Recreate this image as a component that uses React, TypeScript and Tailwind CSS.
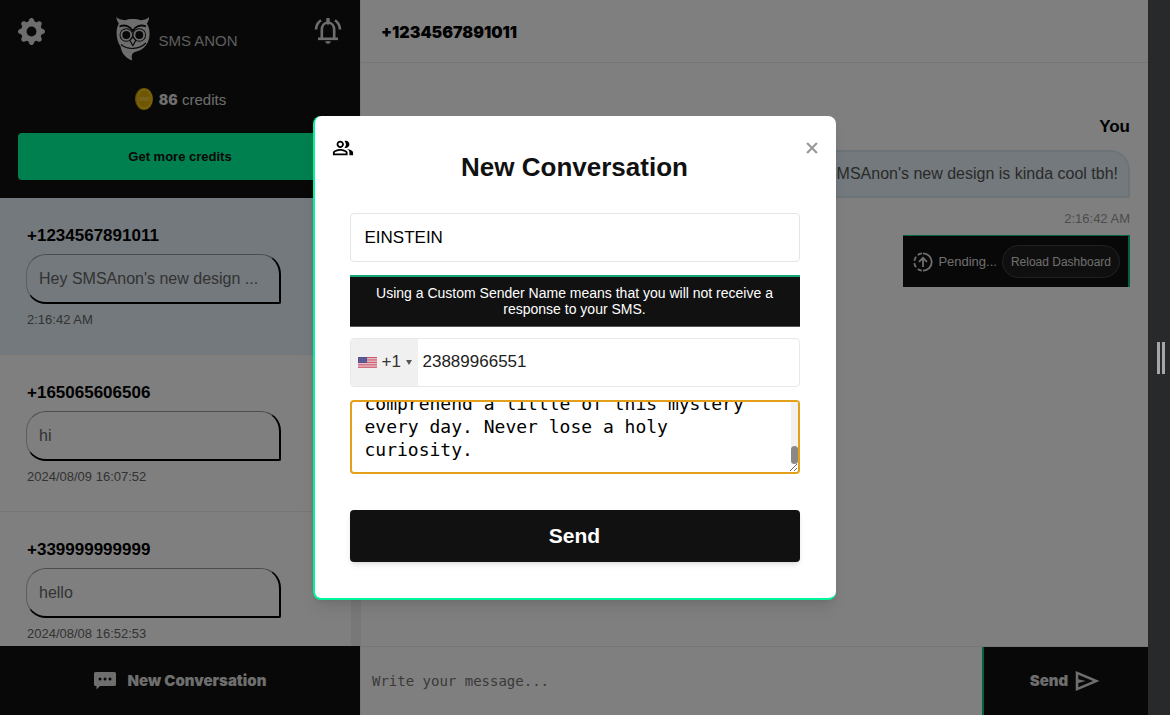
import { useEffect, useRef, useState } from 'react'
import { BsGearFill } from 'react-icons/bs'
import { MdOutlinePeopleAlt } from 'react-icons/md'

interface Conversation {
  number: string
  preview: string
  time: string
}

const conversations: Conversation[] = [
  { number: '+1234567891011', preview: "Hey SMSAnon's new design ...", time: '2:16:42 AM' },
  { number: '+165065606506', preview: 'hi', time: '2024/08/09 16:07:52' },
  { number: '+339999999999', preview: 'hello', time: '2024/08/08 16:52:53' },
]

const QUOTE =
  'The important thing is not to stop questioning. Curiosity has its own reason for existing. One cannot help but be in awe when he contemplates the mysteries of eternity, of life, of the marvelous structure of reality. It is enough if one tries merely to comprehend a little of this mystery every day. Never lose a holy curiosity.'

function OwlLogo() {
  return (
    <svg className="h-11 w-[34px]" viewBox="0 0 34 44" fill="none">
      <path
        fill="currentColor"
        d="M.5 0C2 2.200 5 2.500 9 3.300C13.500 1.500 20 1.500 25 3.300C29 2.500 31.500 2.200 33 0C33.200 2.500 32.200 4.500 30.800 6.500C33.300 10 34 15.500 33.300 20C32.300 27.500 27 33 20.500 34.500C16 35.500 14.800 38 16.300 43.500C9.500 41 5.500 36 4.500 29.500C.5 24 -1 13.500 2.800 6.500C1.400 4.500 .4 2.500 .5 0Z"
      />
      <path stroke="#111" strokeWidth="1.800" d="M3.500 9.500C9 7 14.500 9.500 16.800 14C19 9.500 24.500 7 30 9.500" />
      <circle cx="10.300" cy="18" r="6.800" fill="#111" />
      <circle cx="23.300" cy="18" r="6.800" fill="#111" />
      <circle cx="10.300" cy="18" r="4.900" stroke="currentColor" strokeWidth="1.900" />
      <circle cx="23.300" cy="18" r="4.900" stroke="currentColor" strokeWidth="1.900" />
      <path fill="currentColor" stroke="#111" strokeWidth="1.200" d="M16.800 20L19.800 23.300L16.800 28.500L13.800 23.300Z" />
      <path stroke="#111" strokeWidth="1.200" d="M5 27.500C12 33.500 23 32.500 30 26" />
    </svg>
  )
}

function BellIcon() {
  return (
    <svg className="h-[26px] w-7" viewBox="0 0 28 26" fill="none" stroke="currentColor" strokeWidth="2.600">
      <path d="M7.800 20.500V12C7.800 7.500 10.500 4.500 14 4.500S20.200 7.500 20.200 12V20.500" />
      <path d="M4 20.800H24" />
      <path d="M14 1V5" strokeWidth="3.400" strokeLinecap="round" />
      <path d="M7 2.200C3.800 4.400 2.200 7.500 2 11.500M21 2.200C24.200 4.400 25.800 7.500 26 11.500" />
      <path fill="currentColor" stroke="none" d="M11.200 23.300H16.800C16.600 24.800 15.500 25.700 14 25.700S11.400 24.800 11.200 23.300Z" />
    </svg>
  )
}

function Coin() {
  return (
    <svg className="h-[22px] w-[18px]" viewBox="0 0 18 22">
      <ellipse cx="9" cy="11" rx="9" ry="11" fill="#c99a00" />
      <ellipse cx="9.500" cy="11" rx="8" ry="10.500" fill="#efc31a" />
      <ellipse cx="9.500" cy="11" rx="6.200" ry="8.300" fill="#dfab08" />
      <text x="9.500" y="13" textAnchor="middle" fontSize="5" fontWeight="bold" fontFamily="Liberation Sans, sans-serif" fill="#f3d75a">
        SMS
      </text>
    </svg>
  )
}

function ChatIcon() {
  return (
    <svg className="h-[19px] w-[22px]" viewBox="0 0 22 19">
      <path fill="currentColor" d="M1.500 0H20.500A1.500 1.500 0 0 1 22 1.500V12.500A1.500 1.500 0 0 1 20.500 14H6L2.500 17.500V14H1.500A1.500 1.500 0 0 1 0 12.500V1.500A1.500 1.500 0 0 1 1.500 0Z" />
      <circle cx="6" cy="7" r="1.500" fill="#111" />
      <circle cx="11" cy="7" r="1.500" fill="#111" />
      <circle cx="16" cy="7" r="1.500" fill="#111" />
    </svg>
  )
}

function PendingIcon() {
  return (
    <svg className="size-5 shrink-0" viewBox="0 0 20 20" fill="none" stroke="currentColor" strokeWidth="1.800">
      <path d="M10 1.300A8.700 8.700 0 0 1 10 18.700" />
      <path d="M10 18.700A8.700 8.700 0 0 1 10 1.300" strokeDasharray="4.400 2.400" strokeDashoffset="-1.200" />
      <path d="M10 15V6M6 9.800L10 5.800L14 9.800" />
    </svg>
  )
}

function SendIcon() {
  return (
    <svg className="size-[30px]" viewBox="0 -960 960 960" fill="currentColor">
      <path d="M120-160v-640l760 320-760 320Zm80-120 474-200-474-200v140l240 60-240 60v140Z" />
    </svg>
  )
}

function UsFlag() {
  return (
    <svg className="h-[11px] w-[19px] shrink-0" viewBox="0 0 19 13" preserveAspectRatio="none">
      <rect width="19" height="13" fill="#f4e9ea" />
      {[0, 2, 4, 6, 8, 10, 12].map(y => (
        <rect key={y} y={y} width="19" height="1.2" fill="#c9586c" />
      ))}
      <rect width="9" height="7" fill="#50528f" />
      <path d="M1 2H8M1 3.500H8M1 5H8" stroke="#8889b4" strokeWidth=".6" strokeDasharray=".8 .8" />
    </svg>
  )
}

function ConversationItem({ item, active }: { item: Conversation; active: boolean }) {
  return (
    <li className={`border-b border-[#ededed] ${active ? 'bg-[#e6f2f8]' : 'bg-white'}`}>
      <a href="#" className="block px-[26px] pt-[26px] pb-[25px]">
        <h3 className="pl-px text-[17px] leading-6 font-bold text-black">{item.number}</h3>
        <p className="mt-[6px] h-[50px] w-[255px] truncate rounded-[20px] rounded-br-xs border-t border-r-2 border-b-2 border-l border-t-[#999] border-r-black border-b-black border-l-[#bbb] pl-3 text-base leading-[48px] text-[#666]">
          {item.preview}
        </p>
        <time className="mt-[7px] block pl-px text-[13px] leading-[18px] text-[#666]">{item.time}</time>
      </a>
    </li>
  )
}

function Sidebar({ onNew }: { onNew: () => void }) {
  return (
    <aside className="flex w-[360px] shrink-0 flex-col">
      <header className="bg-[#111] px-[18px] pt-[17px] pb-[18px] text-[#ddd]">
        <div className="flex h-[45px] items-start justify-between">
          <button aria-label="Settings" className="pt-px">
            <BsGearFill className="size-[27px]" />
          </button>
          <a href="#" aria-label="SMS Anon" className="flex items-center gap-2 pr-[5px]">
            <OwlLogo />
            <span className="pt-1 text-[15px] text-[#bbb]">SMS ANON</span>
          </a>
          <button aria-label="Notifications" className="pt-px">
            <BellIcon />
          </button>
        </div>
        <div className="mt-[25px] flex h-6 items-center justify-center gap-[6px] pl-px text-[15px]">
          <Coin />
          <p className="pt-[2px]">
            <strong className="font-['Inter',sans-serif] text-[14px] font-black">86</strong> credits
          </p>
        </div>
        <button className="mt-[22px] h-[47px] w-full rounded bg-[#00ff9f] text-[13px] font-bold text-[#111]">Get more credits</button>
      </header>
      <div className="flex min-h-0 flex-1">
        <ul className="flex-1 overflow-hidden">
          {conversations.map((item, i) => (
            <ConversationItem key={item.number} item={item} active={i === 0} />
          ))}
        </ul>
        <div className="w-[9px] bg-[#f1f1f1]" />
      </div>
      <button
        onClick={onNew}
        className="flex h-[69px] shrink-0 items-center justify-center gap-3 bg-[#111] pt-px font-['Inter',sans-serif] text-[15px] font-black text-[#ddd]"
      >
        <ChatIcon />
        New Conversation
      </button>
    </aside>
  )
}

function Chat() {
  return (
    <main className="flex min-w-0 flex-1 flex-col border-l border-[#f1f1f1] bg-white">
      <header className="flex h-[63px] shrink-0 items-center border-b border-[#ededed] px-5 pt-[2px]">
        <h2 className="font-['Inter',sans-serif] text-base font-black text-black">+1234567891011</h2>
      </header>
      <section className="flex flex-1 flex-col items-end px-[18px] pt-[52px]">
        <h3 className="text-[17px] leading-6 font-bold text-black">You</h3>
        <p className="mt-[11px] h-[48px] rounded-[20px] rounded-br-none border-2 border-[#dbe9f0] bg-[#e6f2f8] px-[10px] text-base leading-[43px] text-[#555]">
          Hey SMSAnon's new design is kinda cool tbh!
        </p>
        <time className="mt-[12px] text-[13px] leading-[18px] text-[#999]">2:16:42 AM</time>
        <div className="mt-[7px] flex h-[52px] items-center gap-[5px] border-t border-r-2 border-[#00c480] bg-[#111] pr-2 pl-[10px] text-[13px] text-[#ddd]">
          <PendingIcon />
          <span>Pending...</span>
          <button className="h-[33px] rounded-full border border-[#444] bg-[#1f1f1f] px-2 text-xs">Reload Dashboard</button>
        </div>
      </section>
      <form className="flex h-[69px] shrink-0 border-t border-[#ededed]" onSubmit={e => e.preventDefault()}>
        <input
          aria-label="Message"
          placeholder="Write your message..."
          className="min-w-0 flex-1 px-[11px] font-['DejaVu_Sans_Mono',monospace] text-[14px] placeholder-[#757575] outline-none"
        />
        <button className="flex w-[166px] items-center justify-center gap-1 border-l-2 border-[#00c480] bg-[#111] font-['Inter',sans-serif] text-[15px] font-black text-[#ddd]">
          Send
          <SendIcon />
        </button>
      </form>
    </main>
  )
}

function NewConversationModal({ onClose }: { onClose: () => void }) {
  const [sender, setSender] = useState('EINSTEIN')
  const [phone, setPhone] = useState('23889966551')
  const [message, setMessage] = useState(QUOTE)
  const box = useRef<HTMLTextAreaElement>(null)

  // start at the end of the text
  useEffect(() => {
    const el = box.current
    if (!el) return
    el.focus()
    el.setSelectionRange(el.value.length, el.value.length)
    el.scrollTop = el.scrollHeight
  }, [])

  return (
    <div className="absolute inset-0 z-50 flex items-center justify-center bg-black/50">
      <form
        role="dialog"
        aria-label="New Conversation"
        onSubmit={e => e.preventDefault()}
        className="w-full max-w-[523px] rounded-lg border-b-2 border-l-2 border-[#00f59b] bg-white pr-9 pb-9 pl-[35px] shadow-lg"
      >
        <div className="-mx-[18px] flex h-[52px] items-center justify-between pt-3">
          <MdOutlinePeopleAlt className="size-[22px] text-black" />
          <button type="button" aria-label="Close" onClick={onClose}>
            <svg className="size-3 text-[#999]" viewBox="0 0 11 11" stroke="currentColor" strokeWidth="2">
              <path d="M1 1L10 10M10 1L1 10" />
            </svg>
          </button>
        </div>
        <h1 className="-mt-4 text-center text-[26px] leading-[30px] font-bold text-[#111]">New Conversation</h1>
        <input
          aria-label="Sender name"
          value={sender}
          onChange={e => setSender(e.target.value)}
          className="mt-[31px] block h-[49px] w-full rounded border border-[#e5e5e5] px-[14px] pt-[2px] text-[17px] text-black outline-none"
        />
        <p className="mt-[13px] border-t-2 border-b border-t-[#16a673] border-b-[#555] bg-[#111] px-6 pt-2 pb-[9px] text-center text-[14px] leading-4 text-white">
          Using a Custom Sender Name means that you will not receive a response to your SMS.
        </p>
        <div className="mt-[11px] flex h-[49px] overflow-hidden rounded border border-[#e8e8e8]">
          <div className="flex items-center bg-[#f0f0f0] pr-[6px] pl-[7px] text-[#333]">
            <UsFlag />
            <select aria-label="Country code" className="ml-[5px] w-[23px] appearance-none text-[17px] outline-none">
              <option>+1</option>
            </select>
            <svg className="ml-px h-[5px] w-[6px]" viewBox="0 0 6 5" fill="#555">
              <path d="M0 0H6L3 5Z" />
            </svg>
          </div>
          <input
            type="tel"
            aria-label="Phone number"
            value={phone}
            onChange={e => setPhone(e.target.value)}
            className="min-w-0 flex-1 px-[5px] text-[17px] text-[#222] outline-none"
          />
        </div>
        <div className="relative mt-[13px]">
          <textarea
            ref={box}
            aria-label="Message"
            value={message}
            onChange={e => setMessage(e.target.value)}
            className="block h-[74px] w-full [scrollbar-width:none] rounded border-2 border-[#e5a019] py-[11px] pr-[21px] pl-[13px] font-['DejaVu_Sans_Mono',monospace] text-[18px] leading-[23px] text-black outline-none"
          />
          <div className="pointer-events-none absolute top-[2px] right-[2px] flex h-[62px] w-[7px] items-end bg-[#f1f1f1]">
            <span className="h-[18px] w-full rounded-full bg-[#888]" />
          </div>
        </div>
        <button className="mt-9 h-[52px] w-full rounded bg-[#111] text-[21px] font-bold text-white shadow-md">Send</button>
      </form>
    </div>
  )
}

export default function App() {
  const [open, setOpen] = useState(true)

  return (
    <div className="flex h-screen bg-[#28292b] font-['Liberation_Sans',Arial,sans-serif]">
      <div className="relative flex min-w-0 flex-1 overflow-hidden">
        <Sidebar onNew={() => setOpen(true)} />
        <Chat />
        {open && <NewConversationModal onClose={() => setOpen(false)} />}
      </div>
      <div className="flex w-[22px] shrink-0 items-center justify-center gap-[2px] pl-[3px]">
        <span className="h-8 w-[3px] bg-[#a5a7a6]" />
        <span className="h-8 w-[3px] bg-[#a5a7a6]" />
      </div>
    </div>
  )
}
